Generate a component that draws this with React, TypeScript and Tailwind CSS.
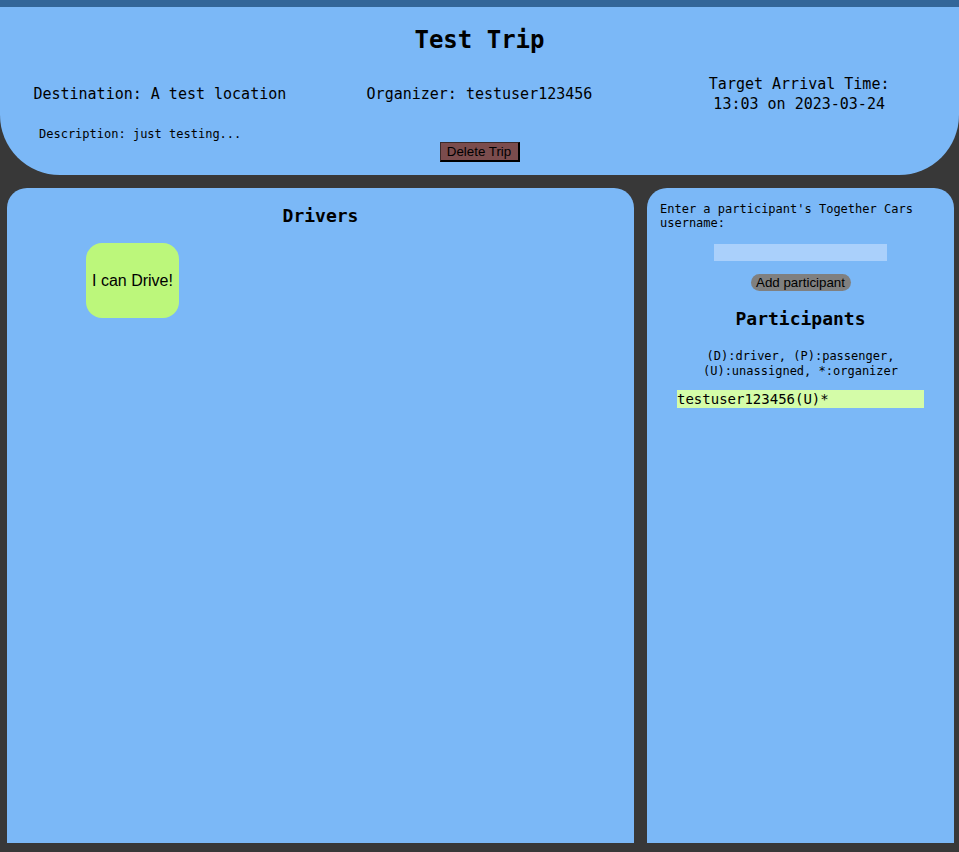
export default function App() {
  const mono = "font-['DejaVu_Sans_Mono','Liberation_Mono',monospace]";
  const sans = "font-['Liberation_Sans',Arial,sans-serif]";

  return (
    <div className={`min-h-screen bg-[#383838] pb-[9px] text-black ${mono}`}>
      {/* Trip header */}
      <header className="border-t-[7px] border-[#336699] bg-[#7bb8f7] rounded-b-[60px] pb-[13px]">
        <h1 className="pt-[19px] text-center text-[24px] leading-[28px] font-bold">Test Trip</h1>

        <div className="mt-[20px] grid grid-cols-3 items-center text-center text-[15px] leading-[20px]">
          <div>Destination: A test location</div>
          <div>Organizer: testuser123456</div>
          <div>
            Target Arrival Time:
            <br />
            13:03 on 2023-03-24
          </div>
        </div>

        <p className="mt-[12px] pl-[39px] text-[12px] leading-[16px]">Description: just testing...</p>
        <div className="flex justify-center">
          <button
            className={`${sans} h-[20px] w-[80px] bg-[#7b4c4d] text-[13.33px] leading-none border-t border-l border-[#3a2a2a] border-b-2 border-r-2 border-b-black border-r-black`}
          >
            Delete Trip
          </button>
        </div>
      </header>

      {/* Drivers + participants */}
      <div className="mt-[13px] grid grid-cols-[627px_307px] gap-[13px] pl-[7px]">
        <section className="h-[655px] rounded-t-[20px] bg-[#7bb8f7]">
          <h2 className="pt-[16px] text-center text-[18px] leading-[24px] font-bold">Drivers</h2>
          <div className="mt-[15px] ml-[79px] flex h-[75px] w-[93px] items-center justify-center rounded-[16px] bg-[#bcf77b]">
            <span className={`${sans} text-[16px]`}>I can Drive!</span>
          </div>
        </section>

        <section className="flex h-[655px] flex-col items-center rounded-t-[20px] bg-[#7bb8f7]">
          <p className="self-stretch px-[13px] pt-[14px] text-[12px] leading-[14px]">
            Enter a participant's Together Cars username:
          </p>
          <input className="mt-[14px] h-[17px] w-[173px] bg-[#aad0fb] outline-none" />
          <button
            className={`${sans} mt-[13px] h-[17px] w-[100px] rounded-full bg-[#808080] text-[13.33px] leading-none`}
          >
            Add participant
          </button>
          <h2 className="mt-[16px] text-[18px] leading-[24px] font-bold">Participants</h2>
          <p className="mt-[18px] text-center text-[12px] leading-[15px]">
            (D):driver, (P):passenger,
            <br />
            (U):unassigned, *:organizer
          </p>
          <div className="mt-[11px] self-stretch mx-[30px] h-[18px] bg-[#d4fca8] text-[14px] leading-[18px]">
            testuser123456(U)*
          </div>
        </section>
      </div>
    </div>
  );
}
